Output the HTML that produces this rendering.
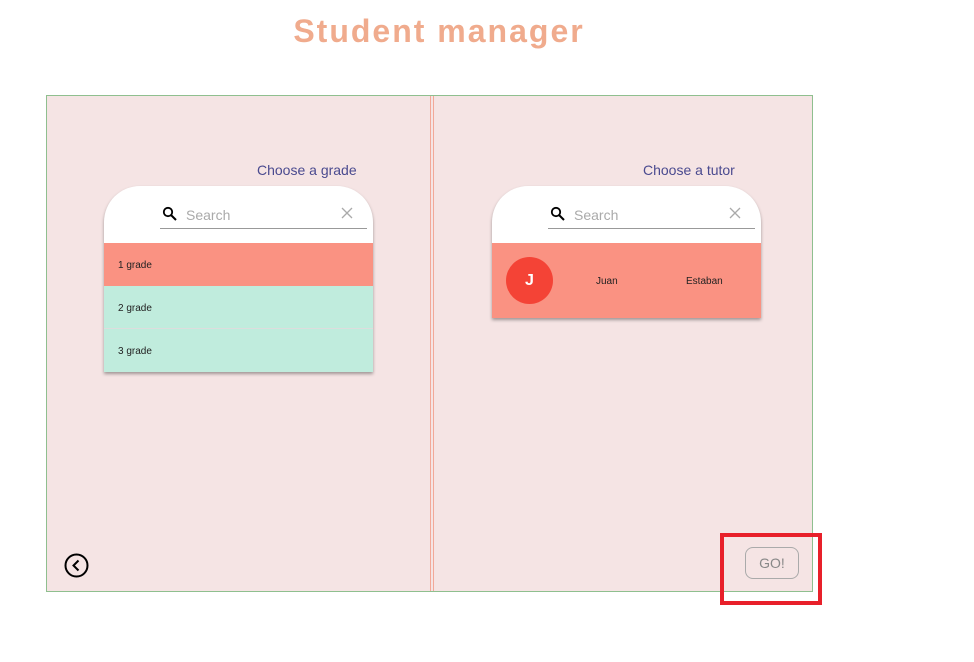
<!DOCTYPE html>
<html><head><style>
body{margin:0;width:974px;height:662px;background:#fff;font-family:"Liberation Sans",sans-serif;position:relative;overflow:hidden}
.a{position:absolute}
h1{position:absolute;left:0;width:878px;text-align:center;top:13px;margin:0;font-size:32px;color:#f0ab8d;letter-spacing:2px;font-weight:bold;font-family:"Liberation Sans",sans-serif}
.box{left:46px;top:95px;width:765px;height:495px;border:1px solid #8fbf8f;background:#f5e4e4}
.lbl{color:#4a4a8f;font-size:14px}
.card{background:#fff;border-radius:36px 36px 0 0;box-shadow:0 2px 3px rgba(0,0,0,.35);overflow:hidden}
.row{position:absolute;left:0;width:100%;font-size:10px;color:#222}
.srch{position:absolute;border-bottom:1px solid #999;height:27px;width:207px}
.srch span{position:absolute;left:26px;top:6px;font-size:14px;color:#aaa}
</style></head><body>
<h1>Student manager</h1>
<div class="a box"></div>
<div class="a" style="left:430px;top:96px;width:1px;height:495px;background:#f2a898"></div>
<div class="a" style="left:433px;top:96px;width:1px;height:495px;background:#f2a898"></div>
<div class="a lbl" style="left:257px;top:162px">Choose a grade</div>
<div class="a lbl" style="left:643px;top:162px">Choose a tutor</div>

<div class="a card" style="left:104px;top:186px;width:269px;height:186px">
 <div class="srch" style="left:56px;top:15px"><svg class="a" style="left:2px;top:5px" width="16" height="16"><circle cx="6" cy="6" r="4.2" fill="none" stroke="#000" stroke-width="1.8"/><path d="M9 9L14 14" stroke="#000" stroke-width="2"/></svg><span>Search</span><svg class="a" style="left:181px;top:6px" width="12" height="12"><path d="M1 1L11 11M11 1L1 11" stroke="#aaa" stroke-width="1.3"/></svg></div>
 <div class="row" style="top:57px;height:43px;background:#fa9282"><span class="a" style="left:14px;top:17px">1 grade</span></div>
 <div class="row" style="top:100px;height:42px;background:#c0ecdd;border-bottom:1px solid #ddd"><span class="a" style="left:14px;top:17px">2 grade</span></div>
 <div class="row" style="top:143px;height:43px;background:#c0ecdd"><span class="a" style="left:14px;top:17px">3 grade</span></div>
</div>

<div class="a card" style="left:492px;top:186px;width:269px;height:132px">
 <div class="srch" style="left:56px;top:15px"><svg class="a" style="left:2px;top:5px" width="16" height="16"><circle cx="6" cy="6" r="4.2" fill="none" stroke="#000" stroke-width="1.8"/><path d="M9 9L14 14" stroke="#000" stroke-width="2"/></svg><span>Search</span><svg class="a" style="left:181px;top:6px" width="12" height="12"><path d="M1 1L11 11M11 1L1 11" stroke="#aaa" stroke-width="1.3"/></svg></div>
 <div class="row" style="top:57px;height:75px;background:#fa9282">
  <div class="a" style="left:14px;top:14px;width:47px;height:47px;border-radius:50%;background:#f44336;color:#fff;font-size:16px;font-weight:bold;text-align:center;line-height:47px">J</div>
  <span class="a" style="left:104px;top:33px">Juan</span>
  <span class="a" style="left:194px;top:33px">Estaban</span>
 </div>
</div>

<svg class="a" style="left:63px;top:552px" width="28" height="28"><circle cx="13.5" cy="13.5" r="11" fill="none" stroke="#000" stroke-width="2"/><path d="M15.5 8.5L10.5 13.5L15.5 18.5" fill="none" stroke="#000" stroke-width="2"/></svg>
<div class="a" style="left:745px;top:547px;width:52px;height:30px;border:1px solid #aaa;border-radius:8px;color:#888;font-size:14px;text-align:center;line-height:30px">GO!</div>
<div class="a" style="left:720px;top:533px;width:94px;height:64px;border:4px solid #e8202a"></div>
</body></html>
